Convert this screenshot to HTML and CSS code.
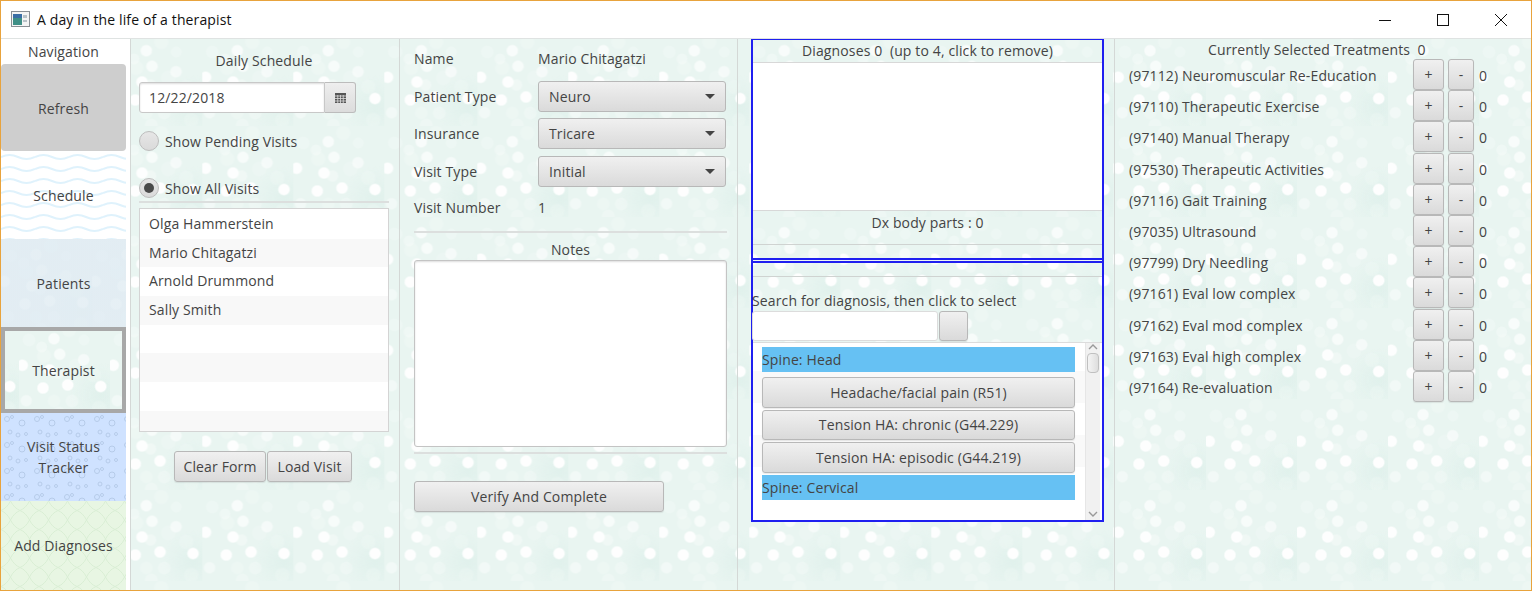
FILE: index.html
```html
<!DOCTYPE html>
<html lang="en">
<head>
<meta charset="utf-8">
<title>A day in the life of a therapist</title>
<link rel="stylesheet" href="styles.css">
</head>
<body>
<div class="window">
  <header class="titlebar">
    <svg class="app-icon" width="19" height="17" viewBox="0 0 19 17"><rect x="0.5" y="0.5" width="18" height="15" fill="#f4f4f4" stroke="#8a8f94"/><rect x="2" y="3" width="9" height="11" fill="#3f8f86"/><rect x="2" y="3" width="9" height="4" fill="#3a6ea5"/><rect x="12" y="4" width="4" height="3" fill="#b9c2c8"/><rect x="12" y="9" width="4" height="2" fill="#b9c2c8"/></svg>
    <span class="title-text">A day in the life of a therapist</span>
    <div class="win-controls">
      <svg width="14" height="14" viewBox="0 0 14 14"><path d="M1 7.5H13" stroke="#111" fill="none"/></svg>
      <svg width="14" height="14" viewBox="0 0 14 14"><rect x="1.5" y="1.5" width="11" height="11" stroke="#111" fill="none"/></svg>
      <svg width="14" height="14" viewBox="0 0 14 14"><path d="M1 1L13 13M13 1L1 13" stroke="#111" fill="none"/></svg>
    </div>
  </header>
  <main class="app">
    <nav class="nav">
      <div class="nav-title">Navigation</div>
      <button class="nav-btn nav-refresh">Refresh</button>
      <button class="nav-btn nav-schedule">Schedule</button>
      <button class="nav-btn nav-patients">Patients</button>
      <button class="nav-btn nav-therapist">Therapist</button>
      <button class="nav-btn nav-status">Visit Status<br>Tracker</button>
      <button class="nav-btn nav-dx">Add Diagnoses</button>
    </nav>

    <section class="col col-schedule bokeh">
      <div class="daily-title">Daily Schedule</div>
      <div class="datepicker">
        <div class="date-input">12/22/2018</div>
        <div class="date-btn">
          <svg width="11" height="10" viewBox="0 0 11 10"><rect width="11" height="10" fill="#555"/><path d="M0 3H11M0 5.5H11M0 8H11M2.75 2V10M5.5 2V10M8.25 2V10" stroke="#ddd" stroke-width="0.8"/></svg>
        </div>
      </div>
      <label class="radio radio-first"><span class="radio-dot"></span>Show Pending Visits</label>
      <label class="radio radio-second"><span class="radio-dot radio-on"></span>Show All Visits</label>
      <div class="sep sep-radio"></div>
      <ul class="visit-list">
        <li>Olga Hammerstein</li>
        <li>Mario Chitagatzi</li>
        <li>Arnold Drummond</li>
        <li>Sally Smith</li>
        <li></li><li></li><li></li><li></li>
      </ul>
      <div class="visit-actions">
        <button class="btn btn-clear">Clear Form</button>
        <button class="btn btn-load">Load Visit</button>
      </div>
    </section>

    <section class="col col-patient bokeh">
      <div class="form-grid">
        <span class="form-label">Name</span><span>Mario Chitagatzi</span>
        <span class="form-label">Patient Type</span><div class="combo">Neuro<i class="caret"></i></div>
        <span class="form-label">Insurance</span><div class="combo">Tricare<i class="caret"></i></div>
        <span class="form-label">Visit Type</span><div class="combo">Initial<i class="caret"></i></div>
        <span class="form-label">Visit Number</span><span>1</span>
      </div>
      <div class="sep sep-notes"></div>
      <div class="notes-title">Notes</div>
      <div class="notes"></div>
      <div class="sep sep-verify"></div>
      <button class="btn btn-verify">Verify And Complete</button>
    </section>

    <section class="col col-dx bokeh">
      <div class="dx-box dx-top">
        <div class="dx-title">Diagnoses 0&nbsp; (up to 4, click to remove)</div>
        <div class="dx-selected"></div>
        <div class="dx-parts">Dx body parts : 0</div>
        <div class="sep-thin"></div>
      </div>
      <div class="dx-thin"></div>
      <div class="dx-box dx-bottom">
        <div class="sep-thin"></div>
        <div class="search-label">Search for diagnosis, then click to select</div>
        <div class="search-row">
          <div class="search-input"></div>
          <button class="btn search-btn"></button>
        </div>
        <div class="dx-list">
          <div class="dx-rows">
            <div class="dx-head">Spine: Head</div>
            <button class="btn dx-btn">Headache/facial pain (R51)</button>
            <button class="btn dx-btn">Tension HA: chronic (G44.229)</button>
            <button class="btn dx-btn">Tension HA: episodic (G44.219)</button>
            <div class="dx-head dx-head-last">Spine: Cervical</div>
          </div>
          <div class="scrollbar">
            <svg width="12" height="8" viewBox="0 0 12 8"><path d="M2 6L6 2L10 6" stroke="#999" fill="none" stroke-width="1.4"/></svg>
            <div class="thumb"></div>
            <svg class="scroll-down" width="12" height="8" viewBox="0 0 12 8"><path d="M2 2L6 6L10 2" stroke="#999" fill="none" stroke-width="1.4"/></svg>
          </div>
        </div>
      </div>
    </section>

    <section class="col col-tx bokeh">
      <div class="tx-title">Currently Selected Treatments&nbsp; 0</div>
      <div class="tx-row"><span class="tx-name">(97112) Neuromuscular Re-Education</span><button class="btn tx-plus">+</button><button class="btn tx-minus">-</button><span class="tx-count">0</span></div>
      <div class="tx-row"><span class="tx-name">(97110) Therapeutic Exercise</span><button class="btn tx-plus">+</button><button class="btn tx-minus">-</button><span class="tx-count">0</span></div>
      <div class="tx-row"><span class="tx-name">(97140) Manual Therapy</span><button class="btn tx-plus">+</button><button class="btn tx-minus">-</button><span class="tx-count">0</span></div>
      <div class="tx-row"><span class="tx-name">(97530) Therapeutic Activities</span><button class="btn tx-plus">+</button><button class="btn tx-minus">-</button><span class="tx-count">0</span></div>
      <div class="tx-row"><span class="tx-name">(97116) Gait Training</span><button class="btn tx-plus">+</button><button class="btn tx-minus">-</button><span class="tx-count">0</span></div>
      <div class="tx-row"><span class="tx-name">(97035) Ultrasound</span><button class="btn tx-plus">+</button><button class="btn tx-minus">-</button><span class="tx-count">0</span></div>
      <div class="tx-row"><span class="tx-name">(97799) Dry Needling</span><button class="btn tx-plus">+</button><button class="btn tx-minus">-</button><span class="tx-count">0</span></div>
      <div class="tx-row"><span class="tx-name">(97161) Eval low complex</span><button class="btn tx-plus">+</button><button class="btn tx-minus">-</button><span class="tx-count">0</span></div>
      <div class="tx-row"><span class="tx-name">(97162) Eval mod complex</span><button class="btn tx-plus">+</button><button class="btn tx-minus">-</button><span class="tx-count">0</span></div>
      <div class="tx-row"><span class="tx-name">(97163) Eval high complex</span><button class="btn tx-plus">+</button><button class="btn tx-minus">-</button><span class="tx-count">0</span></div>
      <div class="tx-row"><span class="tx-name">(97164) Re-evaluation</span><button class="btn tx-plus">+</button><button class="btn tx-minus">-</button><span class="tx-count">0</span></div>
    </section>
  </main>
</div>
</body>
</html>
```
FILE: styles.css
```css
:root {
  --w0: rgba(255,255,255,0);
  --bokeh:
    radial-gradient(circle 6.5px at 24px 65px, rgba(255,255,255,.95) 75%, var(--w0)),
    radial-gradient(circle 6.5px at 48.7px 62px, rgba(255,255,255,.95) 75%, var(--w0)),
    radial-gradient(circle 6.5px at 81.7px 63.5px, rgba(255,255,255,.95) 75%, var(--w0)),
    radial-gradient(circle 6.5px at 3.3px 42.3px, rgba(255,255,255,.9) 75%, var(--w0)),
    radial-gradient(circle 6.5px at 30.7px 47px, rgba(255,255,255,.9) 75%, var(--w0)),
    radial-gradient(circle 6.5px at 35px 15.7px, rgba(255,255,255,.7) 75%, var(--w0)),
    radial-gradient(circle 6.5px at 40.7px 31.3px, rgba(255,255,255,.65) 75%, var(--w0)),
    radial-gradient(circle 6.5px at 64.7px 36.7px, rgba(255,255,255,.55) 75%, var(--w0)),
    radial-gradient(circle 6.5px at 7.3px 77.7px, rgba(255,255,255,.4) 75%, var(--w0)),
    radial-gradient(circle 6.5px at 39.3px 50px, rgba(255,255,255,.3) 75%, var(--w0)),
    radial-gradient(circle 7px at 10px 17px, rgba(255,255,255,.2) 80%, var(--w0)),
    radial-gradient(circle 6px at 22.7px 24px, rgba(255,255,255,.28) 80%, var(--w0)),
    radial-gradient(circle 6px at 65px 17px, rgba(255,255,255,.2) 80%, var(--w0)),
    radial-gradient(circle 7px at 40px 90px, rgba(255,255,255,.22) 80%, var(--w0)),
    radial-gradient(circle 7px at 53px 78px, rgba(255,255,255,.22) 80%, var(--w0)),
    radial-gradient(circle 7px at 35px 78px, rgba(255,255,255,.16) 80%, var(--w0)),
    radial-gradient(circle 8px at 25px 33px, rgba(255,255,255,.16) 80%, var(--w0)),
    radial-gradient(circle 8px at 75px 52px, rgba(255,255,255,.14) 80%, var(--w0)),
    radial-gradient(circle 8px at 57px 43px, rgba(255,255,255,.14) 80%, var(--w0)),
    radial-gradient(circle 8px at 50px 7px, rgba(255,255,255,.16) 80%, var(--w0)),
    radial-gradient(circle 8px at 80px 85px, rgba(255,255,255,.14) 80%, var(--w0)),
    radial-gradient(circle 32px at 82px 72px, rgba(212,235,229,.4), rgba(212,235,229,0));
}

* { box-sizing: border-box; }
html, body { margin: 0; height: 100%; overflow: hidden; }
body {
  font-family: "Open Sans", "Noto Sans", sans-serif;
  font-size: 14px;
  letter-spacing: 0.13px;
  color: #444;
}
button { font: inherit; letter-spacing: inherit; color: inherit; padding: 0; }

.window {
  width: 1532px; height: 591px;
  border: 1px solid #e8a33d;
  display: flex; flex-direction: column;
  background: #fff;
}
.titlebar {
  height: 38px; flex: none;
  display: flex; align-items: center;
  padding-left: 10px;
  color: #111;
  border-bottom: 1px solid #dfe3e2;
}
.title-text { margin-left: 7px; }
.win-controls { margin-left: auto; display: flex; gap: 44px; padding-right: 23px; }
.app { flex: 1; display: flex; min-height: 0; }

.bokeh, .nav-therapist {
  background-color: #e9f5f1;
  background-image: var(--bokeh);
  background-size: 91px 91px;
}

/* Navigation */
.nav { width: 130px; flex: none; display: flex; flex-direction: column; background: #fff; border-right: 1px solid #d4d8d6; padding-right: 4px; }
.nav-title { height: 25px; line-height: 26px; text-align: center; }
.nav-btn { border: 0; width: 100%; text-align: center; display: block; line-height: 21px; }
.nav-refresh { height: 87px; padding-top: 2px; background: #cecece; border-radius: 4px; }
.nav-schedule {
  height: 88px;
  background: #fff url("data:image/svg+xml,%3Csvg xmlns='http://www.w3.org/2000/svg' width='34' height='12'%3E%3Cpath d='M0 6 Q8.5 2 17 6 T34 6' fill='none' stroke='%23dff2fc' stroke-width='2'/%3E%3C/svg%3E");
}
.nav-patients {
  height: 88px;
  background-color: #e2edf3;
  background-image: linear-gradient(rgba(226,237,243,.85), rgba(226,237,243,.85)), var(--bokeh);
  background-size: 91px 91px;
}
.nav-therapist {
  height: 86px;
  border: 4px solid #a8a8a8;
  background-position: 14px -8px;
}
.nav-status {
  height: 88px;
  background: #cfe2ff url("data:image/svg+xml,%3Csvg xmlns='http://www.w3.org/2000/svg' width='30' height='26'%3E%3Cg fill='none' stroke='%23b6cbe8'%3E%3Ccircle cx='6' cy='6' r='2.5'/%3E%3Ccircle cx='11' cy='4' r='1.5'/%3E%3Ccircle cx='21' cy='10' r='3'/%3E%3Ccircle cx='9' cy='19' r='2'/%3E%3Ccircle cx='25' cy='21' r='1.5'/%3E%3Ccircle cx='17' cy='22' r='2'/%3E%3C/g%3E%3C/svg%3E");
}
.nav-dx {
  flex: 1;
  background: #e8f6e3 url("data:image/svg+xml,%3Csvg xmlns='http://www.w3.org/2000/svg' width='19' height='19'%3E%3Cpath d='M0 9.5 Q6 7 9.5 0 Q13 7 19 9.5 Q13 12 9.5 19 Q6 12 0 9.5Z' fill='none' stroke='%23d9eed4'/%3E%3C/svg%3E");
}

/* Columns */
.col { flex: none; border-right: 1px solid #d4d8d6; min-height: 0; }

.col-schedule { width: 269px; padding: 0 10px 0 8px; background-position: -19.7px -4px; }
.daily-title { height: 43px; line-height: 43px; text-align: center; }
.datepicker { display: flex; height: 31px; width: 217px; }
.date-input { flex: 1; background: #fff; border: 1px solid #c8c8c8; border-radius: 3px 0 0 3px; padding-left: 9px; line-height: 29px; box-shadow: inset 0 1px 2px #ddd; }
.date-btn { width: 31px; display: flex; align-items: center; justify-content: center; border: 1px solid #bcbcbc; border-left: 0; border-radius: 0 3px 3px 0; background: linear-gradient(#eee, #dcdcdc); }
.radio { display: flex; align-items: center; height: 20px; gap: 6px; }
.radio-first { margin-top: 18px; }
.radio-second { margin-top: 27px; }
.radio-dot { width: 20px; height: 20px; border-radius: 50%; border: 1px solid #bdbdbd; background: linear-gradient(#e6e6e6, #dadada); display: flex; align-items: center; justify-content: center; }
.radio-on::after { content: ""; width: 10px; height: 10px; border-radius: 50%; background: #4a4a4a; }
.sep { height: 2px; background: #dcdfde; }
.sep-radio { margin-top: 3px; }
.visit-list { list-style: none; margin: 5px 0 0; padding: 1px 0 0; height: 224px; background: #fff; border: 1px solid #d4d4d4; overflow: hidden; }
.visit-list li { height: 28.7px; line-height: 28.7px; padding-left: 9px; }
.visit-list li:nth-child(even) { background: #f8f8f8; }
.visit-actions { display: flex; justify-content: center; gap: 1px; margin: 19px 0 0 -2px; }

.btn { border: 1px solid #b8b8b8; border-radius: 3px; background: linear-gradient(#f0f0f0, #dadada); box-shadow: 0 1px 1px rgba(0,0,0,.08); text-align: center; }
.btn-clear { width: 92px; height: 31px; }
.btn-load { width: 85px; height: 31px; }

.col-patient { width: 338px; padding: 0 10px 0 14px; background-position: -13.7px -4px; }
.form-grid { display: grid; grid-template-columns: 124px 188px; grid-template-rows: 31px 30px 30px 30px 28px; row-gap: 7.5px; align-items: center; padding-top: 3.5px; height: 192px; }
.combo { height: 31px; padding: 0 10px; border: 1px solid #b8b8b8; border-radius: 3px; background: linear-gradient(#f0f0f0, #dadada); display: flex; align-items: center; justify-content: space-between; }
.caret { width: 0; height: 0; border-left: 5px solid transparent; border-right: 5px solid transparent; border-top: 5px solid #444; }
.notes-title { height: 27px; padding-top: 6px; line-height: 22px; text-align: center; }
.notes { height: 187px; background: #fff; border: 1px solid #c4c4c4; border-radius: 3px; box-shadow: inset 0 1px 2px #ddd; }
.sep-verify { margin-top: 5px; }
.btn-verify { margin-top: 27px; width: 250px; height: 31px; display: block; }

.col-dx { width: 377px; padding-left: 13px; background-position: 11.3px -4px; }
.dx-box { width: 353px; border: 2px solid #1f1ff0; border-width: 1px 2px; }
.dx-top { height: 219px; border-bottom: 0; display: flex; flex-direction: column; }
.dx-title { height: 22px; line-height: 22px; text-align: center; }
.dx-selected { height: 149px; background: #fff; border: 1px solid #d8d8d8; border-width: 1px 0; }
.dx-parts { height: 33px; line-height: 23px; text-align: center; }
.sep-thin { height: 1px; background: #cfd3d1; }
.dx-thin { width: 353px; height: 5px; border: 2px solid #1f1ff0; background: #eef5f2; }
.dx-bottom { height: 259px; padding-top: 13px; border-top: 0; border-bottom-width: 2px; }
.search-label { height: 34px; line-height: 47px; margin-left: -1px; white-space: nowrap; }
.search-row { display: flex; gap: 1px; }
.search-input { width: 186px; height: 30px; margin-left: -1px; background: #fff; border: 1px solid #dcdcdc; border-radius: 3px; }
.search-btn { width: 29px; height: 30px; }
.dx-list { display: flex; height: 178px; margin-top: 1px; background: #fff; border-top: 1px solid #dcdcdc; }
.dx-rows { flex: 1; padding: 4px 10px 0 9px; background: linear-gradient(#fff 28px, #f9f9f9 28px, #f9f9f9 60px, #fff 60px, #fff 92px, #f9f9f9 92px, #f9f9f9 124px, #fff 124px); }
.dx-head { height: 25px; line-height: 26px; background: #66c1f3; margin-bottom: 5px; }
.dx-head-last { margin-top: 2.5px; }
.dx-btn { display: block; width: 100%; height: 30.5px; margin-bottom: 2px; }
.scrollbar { width: 15px; margin-right: 2px; background: #f1f1f1; display: flex; flex-direction: column; align-items: center; border-left: 1px solid #e6e6e6; }
.thumb { width: 12px; height: 20px; margin-top: 2px; border: 1px solid #c0c0c0; border-radius: 4px; background: linear-gradient(90deg, #f4f4f4, #dedede); }
.scroll-down { margin-top: auto; margin-bottom: 2px; }

.col-tx { flex: 1; padding: 0 0 0 14px; border-right: 0; background-position: 0 -4px; }
.tx-title { height: 20px; line-height: 21px; padding-left: 79px; white-space: nowrap; }
.tx-row { display: flex; align-items: center; height: 31.2px; }
.tx-name { width: 284px; flex: none; padding-top: 2px; }
.tx-count { padding-top: 2px; }
.tx-plus { width: 31px; height: 31px; margin-right: 4px; }
.tx-minus { width: 26px; height: 31px; margin-right: 5px; }
```
